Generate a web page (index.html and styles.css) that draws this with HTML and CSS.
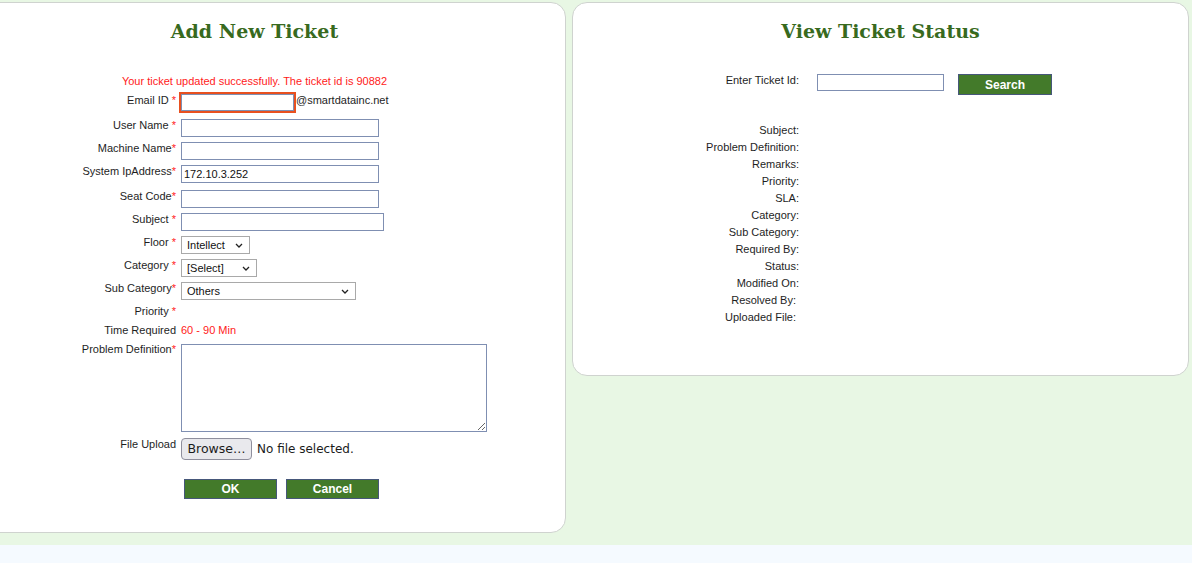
FILE: index.html
```html
<!DOCTYPE html>
<html>
<head>
<meta charset="utf-8">
<title>Tickets</title>
<link rel="stylesheet" href="styles.css">
</head>
<body>
<div class="page">
  <div class="panels">
    <section class="card card-left">
      <h2 class="title">Add New Ticket</h2>
      <p class="msg">Your ticket updated successfully. The ticket id is 90882</p>
      <div class="form">
        <div class="row row-email">
          <label class="lbl">Email ID <span class="req">*</span></label>
          <div class="field"><input class="inp inp-email" type="text"><span class="domain">@smartdatainc.net</span></div>
        </div>
        <div class="row">
          <label class="lbl">User Name <span class="req">*</span></label>
          <div class="field"><input class="inp inp-wide" type="text"></div>
        </div>
        <div class="row">
          <label class="lbl">Machine Name<span class="req">*</span></label>
          <div class="field"><input class="inp inp-wide" type="text"></div>
        </div>
        <div class="row row-ip">
          <label class="lbl">System IpAddress<span class="req">*</span></label>
          <div class="field"><input class="inp inp-wide" type="text" value="172.10.3.252"></div>
        </div>
        <div class="row">
          <label class="lbl">Seat Code<span class="req">*</span></label>
          <div class="field"><input class="inp inp-wide" type="text"></div>
        </div>
        <div class="row">
          <label class="lbl">Subject <span class="req">*</span></label>
          <div class="field"><input class="inp inp-subject" type="text"></div>
        </div>
        <div class="row">
          <label class="lbl">Floor <span class="req">*</span></label>
          <div class="field"><select class="sel sel-floor"><option>Intellect</option></select></div>
        </div>
        <div class="row">
          <label class="lbl">Category <span class="req">*</span></label>
          <div class="field"><select class="sel sel-cat"><option>[Select]</option></select></div>
        </div>
        <div class="row">
          <label class="lbl">Sub Category<span class="req">*</span></label>
          <div class="field"><select class="sel sel-sub"><option>Others</option></select></div>
        </div>
        <div class="row row-text">
          <label class="lbl">Priority <span class="req">*</span></label>
          <div class="field"></div>
        </div>
        <div class="row row-text">
          <label class="lbl">Time Required</label>
          <div class="field"><span class="time">60 - 90 Min</span></div>
        </div>
        <div class="row row-problem">
          <label class="lbl">Problem Definition<span class="req">*</span></label>
          <div class="field"><textarea class="area"></textarea></div>
        </div>
        <div class="row row-file">
          <label class="lbl">File Upload</label>
          <div class="field file"><span class="browse">Browse…</span><span class="nofile">No file selected.</span></div>
        </div>
        <div class="row">
          <div></div>
          <div class="field actions"><button class="btn">OK</button><button class="btn">Cancel</button></div>
        </div>
      </div>
    </section>

    <section class="card card-right">
      <h2 class="title">View Ticket Status</h2>
      <div class="search">
        <label class="lbl">Enter Ticket Id:</label>
        <input class="inp inp-ticket" type="text">
        <button class="btn btn-search">Search</button>
      </div>
      <div class="status">
        <span class="lbl">Subject:</span>
        <span class="lbl">Problem Definition:</span>
        <span class="lbl">Remarks:</span>
        <span class="lbl">Priority:</span>
        <span class="lbl">SLA:</span>
        <span class="lbl">Category:</span>
        <span class="lbl">Sub Category:</span>
        <span class="lbl">Required By:</span>
        <span class="lbl">Status:</span>
        <span class="lbl">Modified On:</span>
        <span class="lbl lbl-sp">Resolved By:</span>
        <span class="lbl lbl-sp">Uploaded File:</span>
      </div>
    </section>
  </div>
</div>
</body>
</html>
```

FILE: styles.css
```css
html, body {
  margin: 0;
  padding: 0;
}
body {
  background: #f5faff;
  font-family: "Liberation Sans", Arial, sans-serif;
  font-size: 11px;
  color: #1e1e1e;
  overflow: hidden;
}
.page {
  background: #e8f7e4;
  height: 545px;
  box-shadow: 0 1px 3px rgba(0, 0, 0, 0.16);
  overflow: hidden;
}
.panels {
  display: flex;
  align-items: flex-start;
  gap: 6px;
  margin-left: -57px;
  padding-top: 2px;
}
.card {
  flex: none;
  box-sizing: border-box;
  background: #fff;
  border: 1px solid #cfd3cf;
  border-radius: 15px;
}
.card-left {
  width: 623px;
  height: 531px;
}
.card-right {
  width: 617px;
  height: 374px;
}
.title {
  margin: 15px 0 0;
  font-family: "DejaVu Serif", serif;
  font-weight: bold;
  font-size: 19px;
  line-height: 26px;
  color: #386a1e;
  text-align: center;
}
.msg {
  margin: 31px 0 0;
  line-height: 13px;
  color: #ff1a1a;
  text-align: center;
}
.form {
  display: flex;
  flex-direction: column;
  gap: 5px;
  margin-top: 6px;
}
.row {
  display: grid;
  grid-template-columns: 232px auto;
  column-gap: 5px;
  align-items: start;
}
.lbl {
  text-align: right;
  line-height: 13px;
  white-space: nowrap;
}
.req {
  color: #ff1a1a;
}
.field {
  display: flex;
  align-items: flex-start;
}
.row-email { margin-bottom: 3px; }
.row-ip { margin-bottom: 2px; }
.row-text { min-height: 14px; }
.row-problem { margin-bottom: 1px; }
.row-file { margin-bottom: 14px; }

.inp {
  box-sizing: border-box;
  height: 18px;
  margin: 0;
  padding: 0 2px;
  border: 1px solid #7f8fb2;
  border-radius: 0;
  background: #fff;
  font-family: "Liberation Sans", Arial, sans-serif;
  font-size: 11px;
  color: #111;
}
.inp-email {
  width: 113px;
  height: 17px;
  outline: 2px solid #e8501f;
  outline-offset: 0;
}
.domain {
  margin-left: 2px;
  line-height: 13px;
}
.inp-wide { width: 198px; }
.inp-subject { width: 203px; }
.sel {
  -webkit-appearance: none;
  appearance: none;
  box-sizing: border-box;
  height: 18px;
  margin: 0;
  padding: 0 0 0 5px;
  border: 1px solid #a9a9a9;
  border-radius: 0;
  font-family: "Liberation Sans", Arial, sans-serif;
  font-size: 11px;
  color: #111;
  background: #fff url("data:image/svg+xml,%3Csvg xmlns='http://www.w3.org/2000/svg' width='8' height='5' viewBox='0 0 8 5'%3E%3Cpath d='M1 1l3 3 3-3' fill='none' stroke='%23222' stroke-width='1.3'/%3E%3C/svg%3E") no-repeat right 6px center;
}
.sel-floor { width: 69px; }
.sel-cat { width: 76px; }
.sel-sub { width: 175px; }
.time {
  color: #ff1a1a;
  line-height: 13px;
}
.area {
  box-sizing: border-box;
  width: 306px;
  height: 88px;
  margin: 1px 0 0;
  border: 1px solid #7f8fb2;
  border-radius: 0;
  padding: 2px;
}
.file {
  align-items: center;
}
.browse {
  box-sizing: border-box;
  width: 71px;
  height: 22px;
  border: 1px solid #8f8f9d;
  border-radius: 4px;
  background: #e9e9ed;
  font-family: "DejaVu Sans", sans-serif;
  font-size: 12.5px;
  line-height: 20px;
  text-align: center;
  color: #1b1b1b;
}
.nofile {
  margin-left: 5px;
  font-family: "DejaVu Sans", sans-serif;
  font-size: 12px;
  color: #1b1b1b;
}
.actions {
  gap: 9px;
  padding-left: 3px;
}
.btn {
  box-sizing: border-box;
  width: 93px;
  height: 20px;
  margin: 0;
  padding: 0;
  border: 1px solid #46577a;
  background: #437a2a;
  color: #fff;
  font-family: "Liberation Sans", Arial, sans-serif;
  font-weight: bold;
  font-size: 12px;
}

.search {
  display: flex;
  align-items: flex-start;
  margin-top: 30px;
}
.search .lbl {
  width: 226px;
  flex: none;
}
.search .inp {
  margin-left: 18px;
  width: 127px;
  height: 17px;
}
.btn-search {
  margin-left: 14px;
  width: 94px;
  height: 21px;
}
.status {
  display: grid;
  grid-template-columns: 226px;
  margin-top: 27px;
}
.status .lbl {
  line-height: 17px;
}
.lbl-sp {
  padding-right: 3px;
}
```
